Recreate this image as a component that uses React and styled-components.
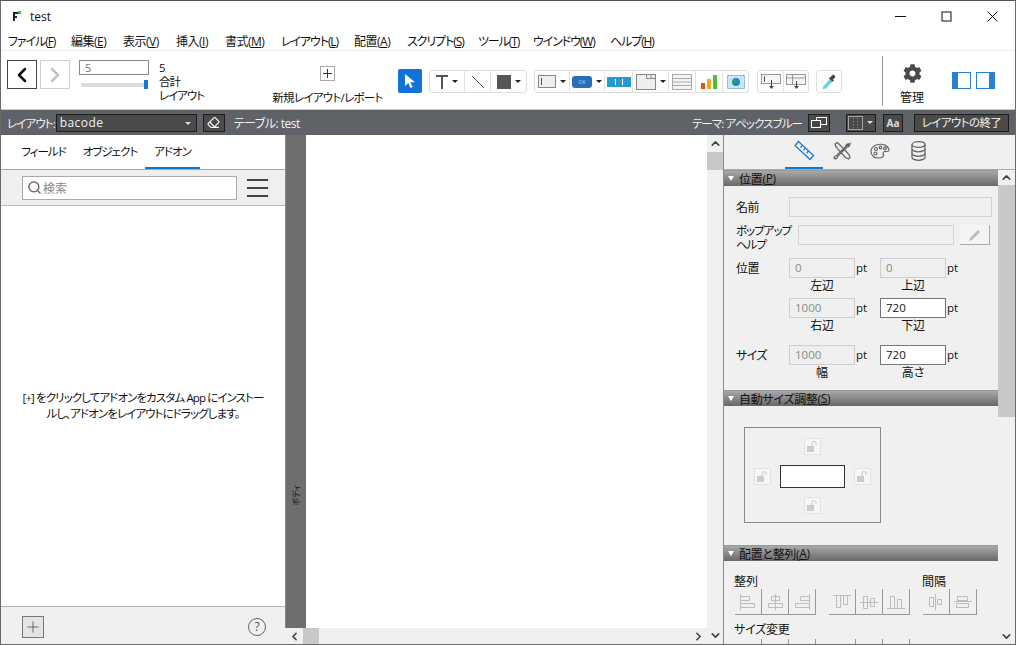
import React from "react";
import styled, { createGlobalStyle } from "styled-components";
import { ChevronLeft, ChevronRight, ChevronUp, ChevronDown, Search, Eraser, Plus } from "lucide-react";
import { FaCog } from "react-icons/fa";

const GlobalStyle = createGlobalStyle`
  html, body {
    margin: 0;
    padding: 0;
    background: #fff;
  }
  * {
    box-sizing: border-box;
  }
  body {
    font-family: "Open Sans", "Noto Sans CJK JP", sans-serif;
    font-size: 12px;
    color: #111;
    font-feature-settings: "palt";
  }
`;

const menus = [
  ["ファイル", "F", 63, true],
  ["編集", "E", 52],
  ["表示", "V", 53],
  ["挿入", "I", 49],
  ["書式", "M", 56],
  ["レイアウト", "L", 73, true],
  ["配置", "A", 53],
  ["スクリプト", "S", 71, true],
  ["ツール", "T", 55, true],
  ["ウインドウ", "W", 77, true],
  ["ヘルプ", "H", 60, true],
];

const LogoIcon = () => (
  <svg width="10" height="11" viewBox="0 0 10 11">
    <rect x="1" y="1" width="5" height="2" fill="#222" />
    <rect x="1" y="1" width="2" height="9" fill="#222" />
    <rect x="1" y="5" width="4" height="2" fill="#222" />
    <rect x="6" y="0" width="3" height="3" fill="#2fc25a" />
  </svg>
);

const NewLayoutIcon = () => (
  <svg width="15" height="15" viewBox="0 0 15 15">
    <rect x="0.5" y="0.5" width="14" height="14" fill="none" stroke="#555" strokeDasharray="1 1" />
    <path d="M7.5 3v9M3 7.5h9" stroke="#333" />
  </svg>
);

const PointerIcon = () => (
  <svg width="14" height="16" viewBox="0 0 14 16">
    <path d="M2 1v12l3.2-3 2.3 5 2.2-1-2.3-4.8H12z" fill="#fff" />
  </svg>
);

const TextToolIcon = () => (
  <svg width="12" height="14" viewBox="0 0 12 14">
    <path d="M0 1h12M6 1v13" stroke="#555" strokeWidth="2" fill="none" />
  </svg>
);

const LineToolIcon = () => (
  <svg width="14" height="14" viewBox="0 0 14 14">
    <path d="M1 1l12 12" stroke="#555" />
  </svg>
);

const FieldIcon = () => (
  <svg width="18" height="14" viewBox="0 0 18 14">
    <rect x="0.5" y="0.5" width="17" height="12" fill="#eee" stroke="#888" />
    <path d="M3.5 3v7" stroke="#555" />
  </svg>
);

const ButtonToolIcon = () => (
  <svg width="20" height="12" viewBox="0 0 20 12">
    <rect width="20" height="12" rx="3" fill="#2a6fb5" />
    <text x="10" y="8" fontSize="5" textAnchor="middle" fill="#b5d4f2">OK</text>
  </svg>
);

const ButtonBarIcon = () => (
  <svg width="24" height="10" viewBox="0 0 24 10">
    <rect width="24" height="10" fill="#2a97cf" />
    <path d="M8.5 2v6M15.5 2v6" stroke="#fff" />
  </svg>
);

const TabIcon = () => (
  <svg width="20" height="16" viewBox="0 0 20 16">
    <rect x="0.5" y="0.5" width="19" height="15" fill="#eee" stroke="#888" />
    <path d="M10.500 4.500h9M10.500 0.500v4M15 0.500v4" stroke="#888" fill="none" />
  </svg>
);

const PortalIcon = () => (
  <svg width="20" height="16" viewBox="0 0 20 16">
    <rect x="0.5" y="0.5" width="19" height="15" fill="#f4f4f4" stroke="#aaa" />
    <path d="M0.5 4.5h19M0.5 8h19M0.5 11.5h19" stroke="#aaa" />
  </svg>
);

const ChartIcon = () => (
  <svg width="17" height="15" viewBox="0 0 17 15">
    <rect x="0" y="9" width="4" height="6" fill="#f0500f" />
    <rect x="6" y="5" width="4" height="10" fill="#f5a623" />
    <rect x="12" y="1" width="4" height="14" fill="#4fbf3a" />
  </svg>
);

const WebIcon = () => (
  <svg width="18" height="14" viewBox="0 0 18 14">
    <rect x="0.5" y="0.5" width="17" height="13" fill="#cbe6f5" stroke="#6aa6c8" strokeDasharray="2 1" />
    <circle cx="9" cy="7" r="4" fill="#1d88c4" />
    <path d="M7 4.500c2-1 3 .5 2 2s-2 1-2.500.5z" fill="#46a93a" />
  </svg>
);

const FieldDownIcon = () => (
  <svg width="20" height="16" viewBox="0 0 20 16">
    <rect x="0.5" y="0.5" width="19" height="9" fill="#f4f4f4" stroke="#999" />
    <path d="M3.500 2v6" stroke="#555" />
    <path d="M10.500 6v8" stroke="#444" />
    <path d="M8 12h5l-2.500 3z" fill="#444" />
  </svg>
);

const PortalDownIcon = () => (
  <svg width="20" height="16" viewBox="0 0 20 16">
    <rect x="0.5" y="0.5" width="19" height="10" fill="#f4f4f4" stroke="#999" />
    <path d="M0.5 4h19M6.500 0.500v10" stroke="#999" />
    <path d="M10.500 7v7" stroke="#444" />
    <path d="M8 12h5l-2.500 3z" fill="#444" />
  </svg>
);

const DropperIcon = () => (
  <svg width="16" height="18" viewBox="0 0 16 18">
    <path d="M9 6L2.500 13 1.500 16.500 5 15.500 11 9z" fill="#5fd4ea" />
    <path d="M9 6l2 3" stroke="#888" />
    <path d="M9 4.500l1.500-1.500 1-1c1-1 3.500 1 2.500 2.500l-2 2 1 1.200-1.200 1L7.800 5.300z" fill="#444" />
  </svg>
);

const PanelIcon = ({ side }) => (
  <svg width="19" height="17" viewBox="0 0 19 17">
    <rect x="0.500" y="0.500" width="18" height="16" fill="#fff" stroke="#2a7fd0" />
    <rect x={side === "left" ? 1 : 13} y="1" width="5" height="15" fill="#2a7fd0" />
  </svg>
);

const ThemeIcon = () => (
  <svg width="16" height="12" viewBox="0 0 16 12">
    <rect x="5.500" y="0.500" width="10" height="7" fill="none" stroke="#fff" />
    <rect x="0.500" y="3.500" width="9" height="7" fill="#444" stroke="#fff" />
  </svg>
);

const DottedIcon = () => (
  <svg width="15" height="14" viewBox="0 0 15 14">
    <rect x="0.500" y="0.500" width="14" height="13" fill="none" stroke="#fff" strokeDasharray="1 1" />
    <path d="M5.500 2v10M9.500 2v10" stroke="#8a8a8a" strokeDasharray="1 2" />
  </svg>
);

const RulerIcon = () => (
  <svg width="22" height="22" viewBox="0 0 22 22" fill="none" stroke="#1a78d4" strokeWidth="1.300">
    <path d="M5.500 1.500l15 14-3.500 4-15-14z" />
    <path d="M7.500 7.500l1.800-1.800M10.500 10.200l1.800-1.800M13.500 13l1.800-1.800" />
  </svg>
);

const ToolsIcon = () => (
  <svg width="20" height="20" viewBox="0 0 20 20" fill="none" stroke="#666" strokeWidth="1.300">
    <path d="M3 3l2.500-1.500 2 2 9.500 10 1 3-1.500 1.500-3-1.500L4 6z" />
    <path d="M17 2.500l-2.500 1-.5 2-10 9.500-1.500.5-.5 1.500 1.500 1 1.500-1 .5-1.500 9.500-9.500 2-.5 1-2.500-2 1.500-1.500-.5z" fill="#f0f0f0" />
  </svg>
);

const PaletteIcon = () => (
  <svg width="20" height="16" viewBox="0 0 20 16" fill="none" stroke="#666" strokeWidth="1.200">
    <path d="M8 1.500c5-1 10 1 11 5 .5 2-2 2-4 2-2.500 0-2 2-1.500 3.500s-1.500 3-5 3C4 15 1 12.500 1 8.500 1 5 4 2.300 8 1.500z" />
    <circle cx="6" cy="6" r="1.500" />
    <circle cx="5.500" cy="10.500" r="1.500" />
    <circle cx="10.500" cy="4.500" r="1.300" />
    <circle cx="15" cy="5.500" r="1.300" />
  </svg>
);

const DatabaseIcon = () => (
  <svg width="15" height="20" viewBox="0 0 15 20" fill="none" stroke="#666" strokeWidth="1.300">
    <ellipse cx="7.500" cy="3.500" rx="6.500" ry="2.800" />
    <path d="M1 3.500v13c0 1.500 3 2.800 6.500 2.800s6.500-1.300 6.500-2.800v-13" />
    <path d="M1 8c0 1.500 3 2.800 6.500 2.800S14 9.500 14 8M1 12.500c0 1.500 3 2.800 6.500 2.800s6.500-1.300 6.500-2.800" />
  </svg>
);

const PencilIcon = () => (
  <svg width="14" height="14" viewBox="0 0 14 14">
    <path d="M1 13l1-3 8-8 2 2-8 8z" fill="#bbb" />
  </svg>
);

const LockIcon = () => (
  <svg width="11" height="11" viewBox="0 0 11 11">
    <rect x="0" y="5" width="7" height="6" fill="#ccc" />
    <path d="M5 5V2.500a2 2 0 0 1 4 0V4" fill="none" stroke="#ccc" />
  </svg>
);

const AlignIcon = ({ d }) => (
  <svg width="20" height="18" viewBox="0 0 20 18" fill="none" stroke="#bdbdbd">
    <path d={d} />
  </svg>
);

const alignPaths = {
  a: "M2.500 1v16M2.500 3.500h9v4h-9M2.500 10.500h14v4h-14",
  b: "M10.500 1v16M6.500 3.500h8v4h-8zM3.500 10.500h14v4h-14z",
  c: "M17.500 1v16M17.500 3.500h-9v4h9M17.500 10.500h-14v4h14",
  d: "M1 2.500h18M4.500 2.500v12h4v-12M11.500 2.500v9h4v-9",
  e: "M1 9.500h18M4.500 3.500v12h4v-12zM11.500 5.500v8h4v-8z",
  f: "M1 15.500h18M4.500 15.500v-12h4v12M11.500 15.500v-9h4v9",
  g: "M9.500 1v16M3.500 4.500h4v9h-4zM11.500 6.500h4v5h-4z",
  h: "M1 8.500h18M4.500 3.500h10v4h-10zM3.500 10.500h12v4h-12z",
};

const App = () => (
  <>
    <GlobalStyle />
    <Window>
      <TitleBar>
        <LogoSlot>
          <LogoIcon />
        </LogoSlot>
        <TitleText>test</TitleText>
        <WindowControls>
          <WindowButton>
            <svg width="11" height="11" viewBox="0 0 11 11">
              <path d="M0 5.500h11" stroke="#111" />
            </svg>
          </WindowButton>
          <WindowButton>
            <svg width="11" height="11" viewBox="0 0 11 11">
              <rect x="1" y="1" width="9" height="9" fill="none" stroke="#111" />
            </svg>
          </WindowButton>
          <WindowButton>
            <svg width="11" height="11" viewBox="0 0 11 11">
              <path d="M0.500 0.500l10 10M10.500 0.500l-10 10" stroke="#111" />
            </svg>
          </WindowButton>
        </WindowControls>
      </TitleBar>

      <MenuBar>
        {menus.map(([label, key, width, kana]) => (
          <MenuItem key={key + label} $w={width} $kana={kana}>
            {label}(<u>{key}</u>)
          </MenuItem>
        ))}
      </MenuBar>

      <Toolbar>
        <NavGroup>
          <NavButton>
            <ChevronLeft size={24} strokeWidth={2.500} color="#111" />
          </NavButton>
          <NavButton $disabled>
            <ChevronRight size={24} strokeWidth={2.500} color="#c4c4c4" />
          </NavButton>
        </NavGroup>
        <Pager>
          <PageInput>5</PageInput>
          <PageSlider>
            <PageThumb />
          </PageSlider>
        </Pager>
        <PageStats>
          <div>5</div>
          <div>合計</div>
          <div>レイアウト</div>
        </PageStats>
        <NewLayout>
          <NewLayoutIconSlot>
            <NewLayoutIcon />
          </NewLayoutIconSlot>
          <span>新規レイアウト/レポート</span>
        </NewLayout>
        <SelectTool>
          <PointerIcon />
        </SelectTool>
        <ToolGroup>
          <ToolCell $w={35}>
            <TextToolIcon />
            <Caret />
          </ToolCell>
          <ToolCell $w={26}>
            <LineToolIcon />
          </ToolCell>
          <ToolCell $w={35} $last>
            <FillSwatch />
            <Caret />
          </ToolCell>
        </ToolGroup>
        <ToolGroup $ml={7}>
          <ToolCell $w={35}>
            <FieldIcon />
            <Caret />
          </ToolCell>
          <ToolCell $w={35}>
            <ButtonToolIcon />
            <Caret />
          </ToolCell>
          <ToolCell $w={28}>
            <ButtonBarIcon />
          </ToolCell>
          <ToolCell $w={36}>
            <TabIcon />
            <Caret />
          </ToolCell>
          <ToolCell $w={27}>
            <PortalIcon />
          </ToolCell>
          <ToolCell $w={27}>
            <ChartIcon />
          </ToolCell>
          <ToolCell $w={25} $last>
            <WebIcon />
          </ToolCell>
        </ToolGroup>
        <ToolGroup $ml={8}>
          <ToolCell $w={26}>
            <FieldDownIcon />
          </ToolCell>
          <ToolCell $w={24} $last>
            <PortalDownIcon />
          </ToolCell>
        </ToolGroup>
        <ToolGroup $ml={7}>
          <ToolCell $w={24} $last>
            <DropperIcon />
          </ToolCell>
        </ToolGroup>
        <ToolbarDivider />
        <ManageBlock>
          <FaCog size={19} color="#4a4a4a" />
          <span>管理</span>
        </ManageBlock>
        <PanelToggles>
          <PanelIcon side="left" />
          <PanelIcon side="right" />
        </PanelToggles>
      </Toolbar>

      <StatusBar>
        <StatusLabel>レイアウト:</StatusLabel>
        <LayoutSelect>
          bacode
          <SelectCaret />
        </LayoutSelect>
        <DarkButton $w={22} $ml={6}>
          <Eraser size={13} color="#fff" />
        </DarkButton>
        <TableLabel>テーブル: test</TableLabel>
        <StatusRight>
          <StatusLabel>テーマ: アペックスブルー</StatusLabel>
          <DarkButton $w={22} $ml={6}>
            <ThemeIcon />
          </DarkButton>
          <SplitButton>
            <DottedIcon />
            <SplitCaret />
          </SplitButton>
          <DarkButton $w={20} $ml={7}>
            <AaText>Aa</AaText>
          </DarkButton>
          <ExitButton>レイアウトの終了</ExitButton>
        </StatusRight>
      </StatusBar>

      <Workspace>
        <LeftPanel>
          <Tabs>
            <Tab $w={63}>フィールド</Tab>
            <Tab $w={70}>オブジェクト</Tab>
            <Tab $w={55} $active>アドオン</Tab>
          </Tabs>
          <SearchRow>
            <SearchBox>
              <Search size={15} color="#555" />
              検索
            </SearchBox>
            <Hamburger>
              <span />
              <span />
              <span />
            </Hamburger>
          </SearchRow>
          <AddonMessage>
            <div>
              [+] をクリックしてアドオンをカスタム App にインストー
              <br />
              ルし、アドオンをレイアウトにドラッグします。
            </div>
          </AddonMessage>
          <LeftFooter>
            <AddButton>
              <Plus size={18} strokeWidth={1} color="#444" />
            </AddButton>
            <HelpButton>?</HelpButton>
          </LeftFooter>
        </LeftPanel>

        <CanvasColumn>
          <CanvasRow>
            <PartStrip>
              <PartLabel>ボディ</PartLabel>
            </PartStrip>
            <Canvas />
          </CanvasRow>
          <HScrollbar>
            <ScrollArrow $w={18}>
              <ChevronLeft size={13} strokeWidth={3} color="#444" />
            </ScrollArrow>
            <HThumb />
            <ScrollArrow $w={18} $end>
              <ChevronRight size={13} strokeWidth={3} color="#444" />
            </ScrollArrow>
          </HScrollbar>
        </CanvasColumn>

        <VScrollbar>
          <ScrollArrow $h={17}>
            <ChevronUp size={13} strokeWidth={3} color="#444" />
          </ScrollArrow>
          <VThumb $h={18} />
          <ScrollArrow $h={17} $end>
            <ChevronDown size={13} strokeWidth={3} color="#444" />
          </ScrollArrow>
        </VScrollbar>

        <Inspector>
          <InspectorTabs>
            <InspectorTab $active>
              <RulerIcon />
            </InspectorTab>
            <InspectorTab>
              <ToolsIcon />
            </InspectorTab>
            <InspectorTab>
              <PaletteIcon />
            </InspectorTab>
            <InspectorTab>
              <DatabaseIcon />
            </InspectorTab>
          </InspectorTabs>
          <InspectorBody>
            <InspectorContent>
              <SectionHeader>
                <SectionArrow />
                位置(<u>P</u>)
              </SectionHeader>
              <PositionSection>
                <NameRow>
                  <FieldLabel>名前</FieldLabel>
                  <TextInput />
                </NameRow>
                <HelpRow>
                  <HelpLabel>
                    ポップアップ
                    <br />
                    ヘルプ
                  </HelpLabel>
                  <TextInput />
                  <PencilButton>
                    <PencilIcon />
                  </PencilButton>
                </HelpRow>
                <MeasureGrid $top={13}>
                  <FieldLabel>位置</FieldLabel>
                  <NumberInput>0</NumberInput>
                  <Unit>pt</Unit>
                  <NumberInput>0</NumberInput>
                  <Unit>pt</Unit>
                  <span />
                  <Caption>左辺</Caption>
                  <span />
                  <Caption>上辺</Caption>
                  <span />
                </MeasureGrid>
                <MeasureGrid $top={6}>
                  <span />
                  <NumberInput>1000</NumberInput>
                  <Unit>pt</Unit>
                  <NumberInput $active>720</NumberInput>
                  <Unit>pt</Unit>
                  <span />
                  <Caption>右辺</Caption>
                  <span />
                  <Caption>下辺</Caption>
                  <span />
                </MeasureGrid>
                <MeasureGrid $top={13}>
                  <FieldLabel>サイズ</FieldLabel>
                  <NumberInput>1000</NumberInput>
                  <Unit>pt</Unit>
                  <NumberInput $active>720</NumberInput>
                  <Unit>pt</Unit>
                  <span />
                  <Caption>幅</Caption>
                  <span />
                  <Caption>高さ</Caption>
                  <span />
                </MeasureGrid>
              </PositionSection>
              <SectionHeader>
                <SectionArrow />
                自動サイズ調整(<u>S</u>)
              </SectionHeader>
              <AutosizeSection>
                <AutosizeBox>
                  <LockButton $area="top">
                    <LockIcon />
                  </LockButton>
                  <LockButton $area="left">
                    <LockIcon />
                  </LockButton>
                  <AutosizeCenter />
                  <LockButton $area="right">
                    <LockIcon />
                  </LockButton>
                  <LockButton $area="bottom">
                    <LockIcon />
                  </LockButton>
                </AutosizeBox>
              </AutosizeSection>
              <SectionHeader>
                <SectionArrow />
                配置と整列(<u>A</u>)
              </SectionHeader>
              <AlignSection>
                <AlignHeadings>
                  <span>整列</span>
                  <span>間隔</span>
                </AlignHeadings>
                <AlignRow>
                  <AlignGroup>
                    {["a", "b", "c"].map((k) => (
                      <AlignCell key={k}>
                        <AlignIcon d={alignPaths[k]} />
                      </AlignCell>
                    ))}
                  </AlignGroup>
                  <AlignGroup>
                    {["d", "e", "f"].map((k) => (
                      <AlignCell key={k}>
                        <AlignIcon d={alignPaths[k]} />
                      </AlignCell>
                    ))}
                  </AlignGroup>
                  <AlignGroup>
                    {["g", "h"].map((k) => (
                      <AlignCell key={k}>
                        <AlignIcon d={alignPaths[k]} />
                      </AlignCell>
                    ))}
                  </AlignGroup>
                </AlignRow>
                <ResizeHeading>サイズ変更</ResizeHeading>
                <AlignRow>
                  <AlignGroup>
                    <AlignCell />
                    <AlignCell />
                    <AlignCell />
                  </AlignGroup>
                  <AlignGroup>
                    <AlignCell />
                    <AlignCell />
                    <AlignCell />
                  </AlignGroup>
                </AlignRow>
              </AlignSection>
            </InspectorContent>
            <VScrollbar $light>
              <ScrollArrow $h={15}>
                <ChevronUp size={13} strokeWidth={3} color="#444" />
              </ScrollArrow>
              <VThumb $h={232} />
              <ScrollArrow $h={15} $end>
                <ChevronDown size={13} strokeWidth={3} color="#444" />
              </ScrollArrow>
            </VScrollbar>
          </InspectorBody>
        </Inspector>
      </Workspace>
    </Window>
  </>
);

const Window = styled.div`
  width: 1016px;
  height: 645px;
  display: flex;
  flex-direction: column;
  overflow: hidden;
  background: #fff;
  border: 1px solid #6a6a6a;
  border-top-color: #555;
`;

const TitleBar = styled.div`
  height: 30px;
  flex: none;
  display: flex;
  align-items: center;
  padding-left: 11px;
`;

const LogoSlot = styled.div`
  width: 18px;
  display: flex;
`;

const TitleText = styled.span`
  font-size: 12px;
`;

const WindowControls = styled.div`
  margin-left: auto;
  display: flex;
`;

const WindowButton = styled.div`
  width: 46px;
  height: 30px;
  display: flex;
  align-items: center;
  justify-content: center;
`;

const MenuBar = styled.div`
  height: 20px;
  flex: none;
  display: flex;
  align-items: center;
  padding-left: 7px;
  border-bottom: 1px solid #ededed;
`;

const MenuItem = styled.span`
  width: ${(p) => p.$w}px;
  flex: none;
  font-size: 12px;
  letter-spacing: ${(p) => (p.$kana ? "-1.1px" : "-0.5px")};
  white-space: nowrap;
`;

const Toolbar = styled.div`
  height: 59px;
  flex: none;
  display: flex;
  align-items: flex-start;
  padding: 9px 0 0 6px;
  background: #fff;
  border-bottom: 1px solid #c8c8c8;
`;

const NavGroup = styled.div`
  display: flex;
  gap: 3px;
`;

const NavButton = styled.div`
  width: 30px;
  height: 29px;
  display: flex;
  align-items: center;
  justify-content: center;
  border: 1px solid ${(p) => (p.$disabled ? "#cfcfcf" : "#444")};
`;

const Pager = styled.div`
  width: 70px;
  margin-left: 9px;
`;

const PageInput = styled.div`
  height: 15px;
  border: 1px solid #8a8a8a;
  padding-left: 5px;
  font-size: 11px;
  line-height: 13px;
  color: #777;
`;

const PageSlider = styled.div`
  position: relative;
  margin: 8px 1px 0 2px;
  height: 4px;
  background: #dcdcdc;
`;

const PageThumb = styled.div`
  position: absolute;
  right: 0;
  top: -3px;
  width: 4px;
  height: 9px;
  background: #0f7ad8;
`;

const PageStats = styled.div`
  margin: 1px 0 0 10px;
  width: 114px;
  flex: none;
  font-size: 11.500px;
  line-height: 14px;
  letter-spacing: -1px;
`;

const NewLayout = styled.div`
  width: 109px;
  flex: none;
  margin-top: 6px;
  display: flex;
  flex-direction: column;
  align-items: center;
  gap: 9px;
  font-size: 11.500px;
  letter-spacing: -0.7px;
  white-space: nowrap;
  line-height: 15px;
`;

const NewLayoutIconSlot = styled.div`
  display: flex;
  height: 15px;
`;

const SelectTool = styled.div`
  width: 24px;
  height: 24px;
  margin: 9px 7px 0 16px;
  border-radius: 2px;
  background: #1273d6;
  display: flex;
  align-items: center;
  justify-content: center;
`;

const ToolGroup = styled.div`
  display: flex;
  height: 23px;
  margin-top: 10px;
  margin-left: ${(p) => p.$ml || 0}px;
  border: 1px solid #dedede;
  border-radius: 3px;
`;

const ToolCell = styled.div`
  width: ${(p) => p.$w}px;
  display: flex;
  align-items: center;
  justify-content: center;
  gap: 4px;
  border-right: ${(p) => (p.$last ? "none" : "1px solid #e2e2e2")};
`;

const Caret = styled.i`
  width: 0;
  height: 0;
  border-left: 3px solid transparent;
  border-right: 3px solid transparent;
  border-top: 3px solid #222;
`;

const FillSwatch = styled.div`
  width: 14px;
  height: 14px;
  background: #555;
`;

const ToolbarDivider = styled.div`
  width: 1px;
  height: 50px;
  margin: -4px 0 0 40px;
  background: #999;
`;

const ManageBlock = styled.div`
  width: 58px;
  flex: none;
  margin-top: 4px;
  display: flex;
  flex-direction: column;
  align-items: center;
  gap: 7px;
  font-size: 12px;
  line-height: 15px;
`;

const PanelToggles = styled.div`
  display: flex;
  gap: 5px;
  margin: 12px 0 0 11px;
`;

const StatusBar = styled.div`
  height: 25px;
  flex: none;
  display: flex;
  align-items: center;
  padding-left: 6px;
  background: #5f6367;
  color: #f2f2f2;
`;

const StatusLabel = styled.span`
  font-size: 11.500px;
  letter-spacing: -0.9px;
  white-space: nowrap;
`;

const LayoutSelect = styled.div`
  position: relative;
  width: 141px;
  height: 18px;
  margin-left: 1px;
  padding-left: 3px;
  background: #4a4a4a;
  border: 1px solid #1e1e1e;
  font-size: 12px;
  line-height: 16px;
  letter-spacing: 0.4px;
`;

const SelectCaret = styled.i`
  position: absolute;
  right: 5px;
  top: 7px;
  width: 0;
  height: 0;
  border-left: 3px solid transparent;
  border-right: 3px solid transparent;
  border-top: 3px solid #ddd;
`;

const DarkButton = styled.div`
  width: ${(p) => p.$w}px;
  height: 18px;
  margin-left: ${(p) => p.$ml}px;
  display: flex;
  align-items: center;
  justify-content: center;
  background: #4a4a4a;
  border: 1px solid #1e1e1e;
`;

const TableLabel = styled.span`
  margin-left: 9px;
  font-size: 12px;
  letter-spacing: -0.5px;
  white-space: nowrap;
`;

const StatusRight = styled.div`
  margin-left: auto;
  margin-right: 6px;
  display: flex;
  align-items: center;
`;

const SplitButton = styled.div`
  width: 30px;
  height: 18px;
  margin-left: 16px;
  display: flex;
  align-items: center;
  padding-left: 1px;
  gap: 4px;
  background: #4a4a4a;
  border: 1px solid #1e1e1e;
`;

const SplitCaret = styled.i`
  width: 0;
  height: 0;
  border-left: 3px solid transparent;
  border-right: 3px solid transparent;
  border-top: 3px solid #ddd;
`;

const AaText = styled.span`
  font-size: 10px;
  font-weight: 700;
  color: #ddd;
`;

const ExitButton = styled.div`
  width: 95px;
  height: 18px;
  margin-left: 11px;
  background: #4a4a4a;
  border: 1px solid #1e1e1e;
  text-align: center;
  font-size: 11.500px;
  line-height: 16px;
  letter-spacing: -0.6px;
`;

const Workspace = styled.div`
  flex: 1;
  min-height: 0;
  display: flex;
`;

const LeftPanel = styled.div`
  width: 284px;
  flex: none;
  display: flex;
  flex-direction: column;
`;

const Tabs = styled.div`
  height: 34px;
  flex: none;
  display: flex;
  padding-left: 11px;
`;

const Tab = styled.div`
  width: ${(p) => p.$w}px;
  height: 34px;
  text-align: center;
  line-height: 34px;
  font-size: 11.500px;
  letter-spacing: -1px;
  white-space: nowrap;
  border-bottom: 2px solid ${(p) => (p.$active ? "#0f78d4" : "transparent")};
`;

const SearchRow = styled.div`
  height: 37px;
  flex: none;
  display: flex;
  align-items: center;
  padding-left: 21px;
  background: #efefef;
  border-top: 1px solid #aaa;
  border-bottom: 1px solid #bbb;
`;

const SearchBox = styled.div`
  width: 215px;
  height: 24px;
  display: flex;
  align-items: center;
  gap: 1px;
  padding-left: 4px;
  background: #fff;
  border: 1px solid #aaa;
  color: #8a8a8a;
  font-size: 12px;
`;

const Hamburger = styled.div`
  width: 21px;
  margin-left: 10px;
  display: flex;
  flex-direction: column;
  gap: 6px;

  span {
    height: 2px;
    background: #444;
  }
`;

const AddonMessage = styled.div`
  flex: 1;
  display: flex;
  align-items: center;
  justify-content: center;
  background: #fff;
  text-align: center;
  font-size: 11.500px;
  line-height: 16px;
  letter-spacing: -0.9px;
  white-space: nowrap;
`;

const LeftFooter = styled.div`
  height: 38px;
  flex: none;
  display: flex;
  align-items: center;
  justify-content: space-between;
  padding: 2px 19px 0 21px;
  background: #f0f0f0;
  border-top: 1px solid #b5b5b5;
`;

const AddButton = styled.div`
  width: 22px;
  height: 22px;
  display: flex;
  align-items: center;
  justify-content: center;
  background: #e4e4e4;
  border: 1px solid #777;
`;

const HelpButton = styled.div`
  width: 18px;
  height: 18px;
  border: 1px solid #666;
  border-radius: 50%;
  text-align: center;
  font-size: 12px;
  line-height: 16px;
  color: #555;
`;

const CanvasColumn = styled.div`
  width: 422px;
  flex: none;
  display: flex;
  flex-direction: column;
`;

const CanvasRow = styled.div`
  flex: 1;
  min-height: 0;
  display: flex;
`;

const PartStrip = styled.div`
  position: relative;
  width: 21px;
  flex: none;
  background: #6e6e6e;
  border-left: 1px solid #8a8a8a;
`;

const PartLabel = styled.span`
  position: absolute;
  left: 4px;
  top: 350px;
  writing-mode: vertical-rl;
  text-orientation: sideways;
  transform: rotate(180deg);
  font-size: 8px;
  line-height: 12px;
  color: #111;
`;

const Canvas = styled.div`
  flex: 1;
  background: #fff;
`;

const HScrollbar = styled.div`
  height: 16px;
  flex: none;
  display: flex;
  background: #f0f0f0;
`;

const ScrollArrow = styled.div`
  flex: none;
  width: ${(p) => (p.$w ? `${p.$w}px` : "100%")};
  height: ${(p) => (p.$h ? `${p.$h}px` : "100%")};
  margin-${(p) => (p.$h ? "top" : "left")}: ${(p) => (p.$end ? "auto" : "0")};
  display: flex;
  align-items: center;
  justify-content: center;
`;

const HThumb = styled.div`
  width: 16px;
  background: #c8c8c8;
`;

const VScrollbar = styled.div`
  width: 17px;
  flex: none;
  display: flex;
  flex-direction: column;
  background: #f0f0f0;
  border-right: ${(p) => (p.$light ? "none" : "1px solid #8a8a8a")};
`;

const VThumb = styled.div`
  height: ${(p) => p.$h}px;
  flex: none;
  background: #c8c8c8;
`;

const Inspector = styled.div`
  flex: 1;
  min-width: 0;
  display: flex;
  flex-direction: column;
  background: #f0f0f0;
`;

const InspectorTabs = styled.div`
  height: 35px;
  flex: none;
  display: flex;
  padding-left: 61px;
  background: #f0f0f0;
  border-bottom: 1px solid #aaa;
`;

const InspectorTab = styled.div`
  width: 38px;
  height: 34px;
  display: flex;
  align-items: center;
  justify-content: center;
  border-bottom: 2px solid ${(p) => (p.$active ? "#0f78d4" : "transparent")};

  svg {
    flex: none;
  }
`;

const InspectorBody = styled.div`
  flex: 1;
  min-height: 0;
  display: flex;
`;

const InspectorContent = styled.div`
  flex: 1;
  min-width: 0;
  overflow: hidden;
`;

const SectionHeader = styled.div`
  height: 16px;
  display: flex;
  align-items: center;
  gap: 4px;
  padding-left: 4px;
  background: linear-gradient(#a8a8a8, #686868);
  border-top: 1px solid #999;
  font-size: 12px;
  letter-spacing: -0.3px;
  color: #111;

  u {
    margin: 0 -4px;
  }
`;

const SectionArrow = styled.i`
  width: 0;
  height: 0;
  margin-right: 1px;
  border-left: 3px solid transparent;
  border-right: 3px solid transparent;
  border-top: 5px solid #fff;
`;

const PositionSection = styled.div`
  height: 204px;
  padding: 11px 6px 0 12px;
`;

const NameRow = styled.div`
  display: flex;
  height: 20px;
`;

const FieldLabel = styled.span`
  width: 53px;
  flex: none;
  padding-top: 1px;
  font-size: 12px;
  line-height: 20px;
  letter-spacing: -0.6px;
`;

const HelpRow = styled.div`
  display: flex;
  height: 20px;
  margin-top: 8px;
`;

const HelpLabel = styled.div`
  width: 62px;
  height: 28px;
  flex: none;
  margin-top: -1px;
  font-size: 11.500px;
  line-height: 14px;
  letter-spacing: -1px;
`;

const TextInput = styled.div`
  flex: 1;
  height: 20px;
  background: #f0f0f0;
  border: 1px solid #d4d4d4;
`;

const PencilButton = styled.div`
  width: 30px;
  height: 20px;
  margin: 0 2px 0 6px;
  display: flex;
  align-items: center;
  justify-content: center;
  background: #f4f4f4;
  border-right: 1px solid #aaa;
  border-bottom: 1px solid #aaa;
`;

const MeasureGrid = styled.div`
  display: grid;
  grid-template-columns: 53px 66px 25px 66px 25px;
  grid-template-rows: 20px 14px;
  margin-top: ${(p) => p.$top}px;
`;

const NumberInput = styled.div`
  height: 20px;
  padding-left: 5px;
  font-size: 11.500px;
  line-height: 18px;
  background: ${(p) => (p.$active ? "#fff" : "#efefef")};
  border: 1px solid ${(p) => (p.$active ? "#777" : "#cfcfcf")};
  color: ${(p) => (p.$active ? "#111" : "#8a8a8a")};
`;

const Unit = styled.span`
  padding-left: 1px;
  font-size: 11.500px;
  line-height: 20px;
`;

const Caption = styled.span`
  text-align: center;
  font-size: 12px;
  line-height: 16px;
  letter-spacing: -0.2px;
`;

const AutosizeSection = styled.div`
  height: 139px;
  padding: 21px 0 0 20px;
`;

const AutosizeBox = styled.div`
  width: 137px;
  height: 96px;
  border: 1px solid #8a8a8a;
  display: grid;
  grid-template-columns: 35px 65px 35px;
  grid-template-rows: 36px 24px 34px;
  grid-template-areas:
    ". top ."
    "left center right"
    ". bottom .";
  align-items: center;
  justify-items: center;
`;

const LockButton = styled.div`
  grid-area: ${(p) => p.$area};
  width: 17px;
  height: 17px;
  display: flex;
  align-items: center;
  justify-content: center;
  background: #f6f6f6;
  border: 1px solid #e2e2e2;
`;

const AutosizeCenter = styled.div`
  grid-area: center;
  width: 65px;
  height: 23px;
  background: #fff;
  border: 1px solid #333;
`;

const AlignSection = styled.div`
  padding: 13px 0 0 10px;
`;

const AlignHeadings = styled.div`
  display: flex;
  height: 15px;
  font-size: 12px;
  line-height: 16px;

  span:first-child {
    width: 188px;
  }
`;

const AlignRow = styled.div`
  display: flex;
  gap: 13px;
  padding-left: 1px;
`;

const AlignGroup = styled.div`
  display: flex;
  border-bottom: 1px solid #999;
`;

const AlignCell = styled.div`
  width: 27px;
  height: 25px;
  display: flex;
  align-items: center;
  justify-content: center;
  border-right: 1px solid #999;
`;

const ResizeHeading = styled.div`
  margin-top: 7px;
  height: 17px;
  font-size: 12px;
  line-height: 16px;
  letter-spacing: -0.2px;
`;

export default App;
